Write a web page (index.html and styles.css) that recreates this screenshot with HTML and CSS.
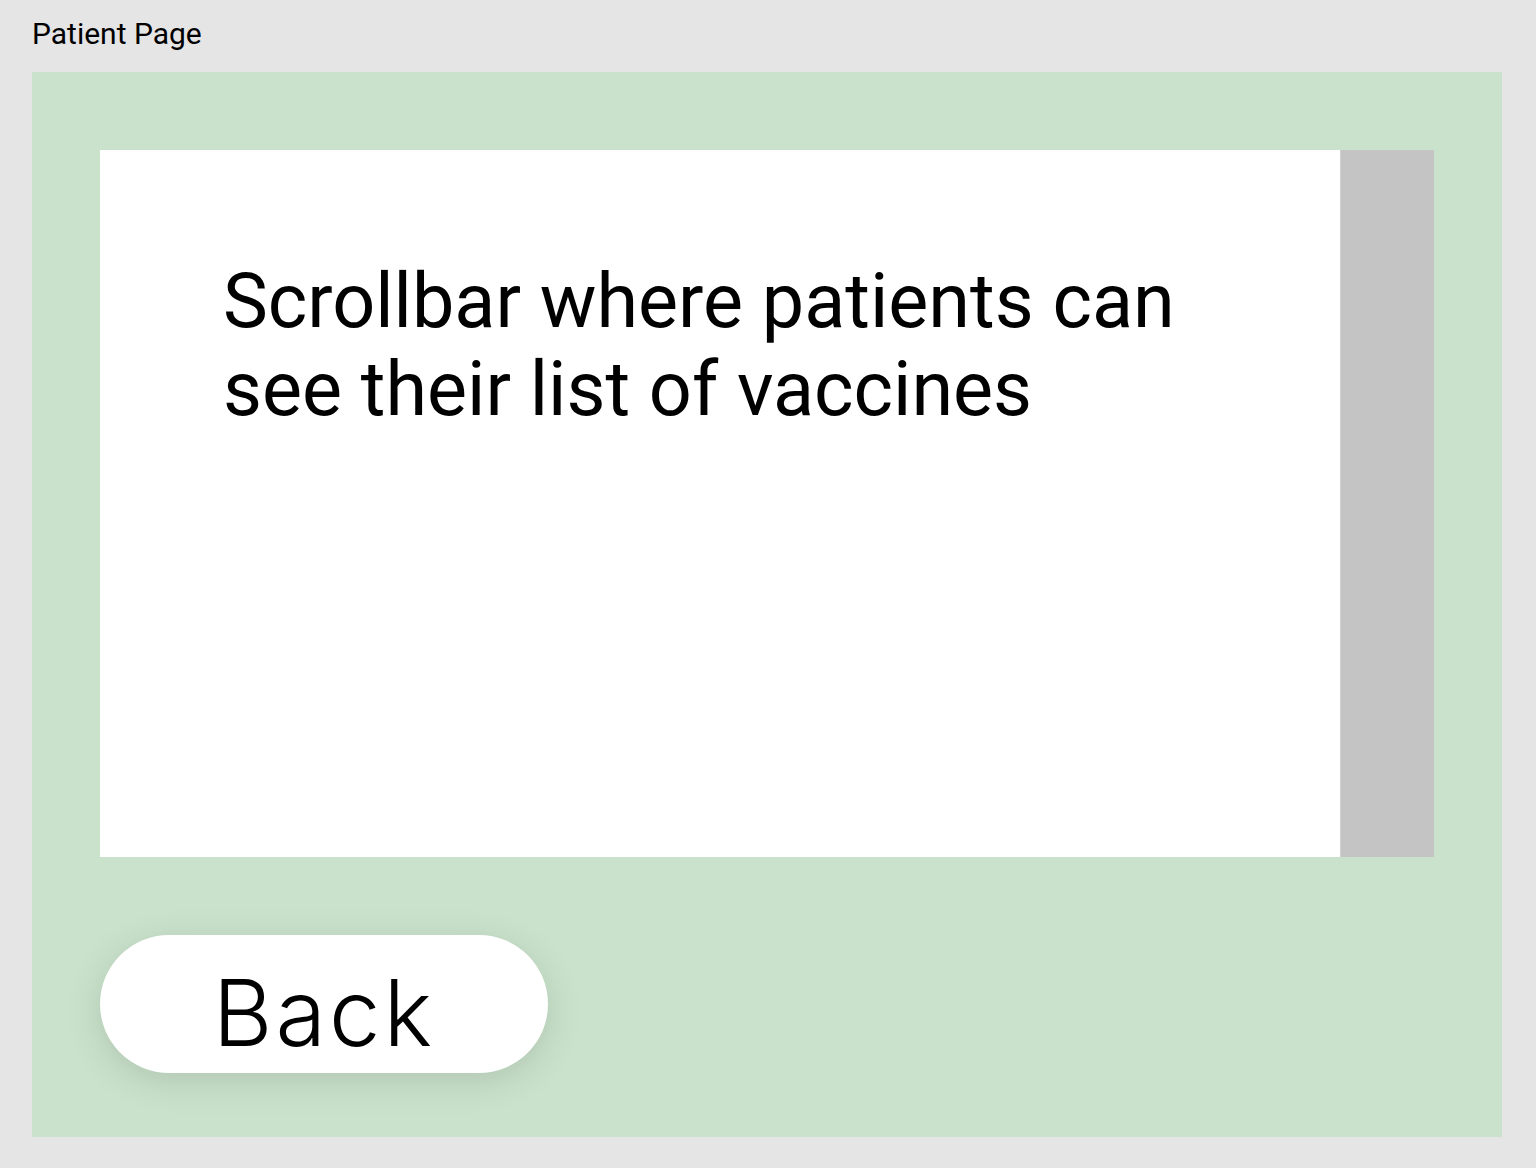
FILE: index.html
```html
<!DOCTYPE html>
<html>
<head>
<meta charset="utf-8">
<link rel="stylesheet" href="styles.css">
</head>
<body>
<div class="page-title">Patient Page</div>
<div class="frame">
  <div class="list-area">
    <div class="list-panel">
      <p class="list-text">Scrollbar where patients can see their list of vaccines</p>
    </div>
    <div class="scrollbar"></div>
  </div>
  <button class="back-btn">Back</button>
</div>
</body>
</html>
```

FILE: styles.css
```css
html, body {
  margin: 0;
  padding: 0;
}
body {
  background: #e5e5e5;
  width: 1536px;
  height: 1168px;
  overflow: hidden;
  font-family: Roboto, "Liberation Sans", sans-serif;
}
.page-title {
  font-size: 30px;
  line-height: 35px;
  padding: 16px 0 0 32px;
  height: 56px;
  color: #000;
}
.frame {
  margin-left: 32px;
  width: 1470px;
  height: 1065px;
  background: #cae2cb;
  box-sizing: border-box;
  padding: 78px 0 0 68px;
  display: flex;
  flex-direction: column;
  align-items: flex-start;
}
.list-area {
  display: flex;
  height: 707px;
}
.list-panel {
  width: 1240px;
  background: #fff;
  box-sizing: border-box;
  padding: 107px 0 0 123px;
}
.list-text {
  margin: 0;
  width: 1000px;
  font-size: 75.5px;
  line-height: 88px;
  color: #000;
}
.scrollbar {
  width: 94px;
  background: #c4c4c4;
  border-left: 1px solid #cfcfcf;
  box-sizing: border-box;
}
.back-btn {
  margin-top: 78px;
  width: 448px;
  height: 138px;
  border: none;
  border-radius: 69px;
  background: #fff;
  box-shadow: 0 8px 36px rgba(0, 0, 0, 0.13);
  font-family: Inter, "DejaVu Sans", sans-serif;
  font-weight: 300;
  font-size: 92px;
  letter-spacing: 3px;
  color: #000;
  padding: 18px 0 0 0;
  line-height: 100px;
  cursor: pointer;
}
```
